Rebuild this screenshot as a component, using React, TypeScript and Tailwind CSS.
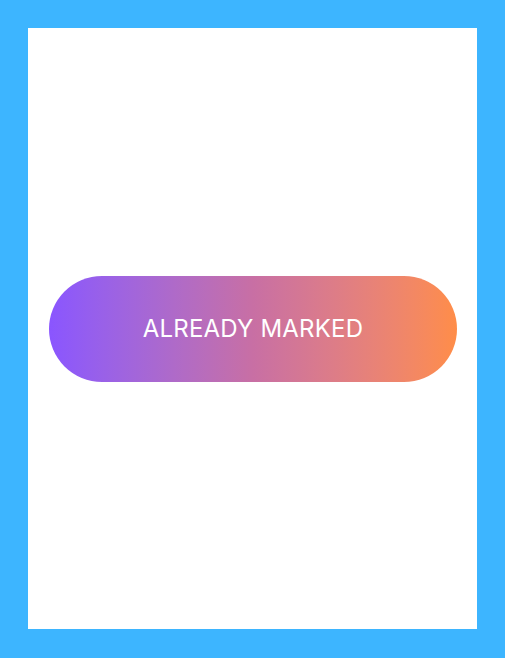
export default function App() {
  return (
    <div className="flex h-[658px] w-[505px] bg-[#3db5ff] p-[28px] pb-[29px]">
      <div className="flex flex-1 items-center bg-white px-[20px] pl-[21px] pt-[1px]">
        <button
          type="button"
          className="flex h-[106px] w-full items-center justify-center rounded-full bg-gradient-to-r from-[#8a55ff] via-[#c86fa4] to-[#ff8d48] text-[24px] tracking-[0.2px] text-white"
          style={{ fontFamily: "Inter, 'Open Sans', sans-serif" }}
        >
          ALREADY MARKED
        </button>
      </div>
    </div>
  );
}
